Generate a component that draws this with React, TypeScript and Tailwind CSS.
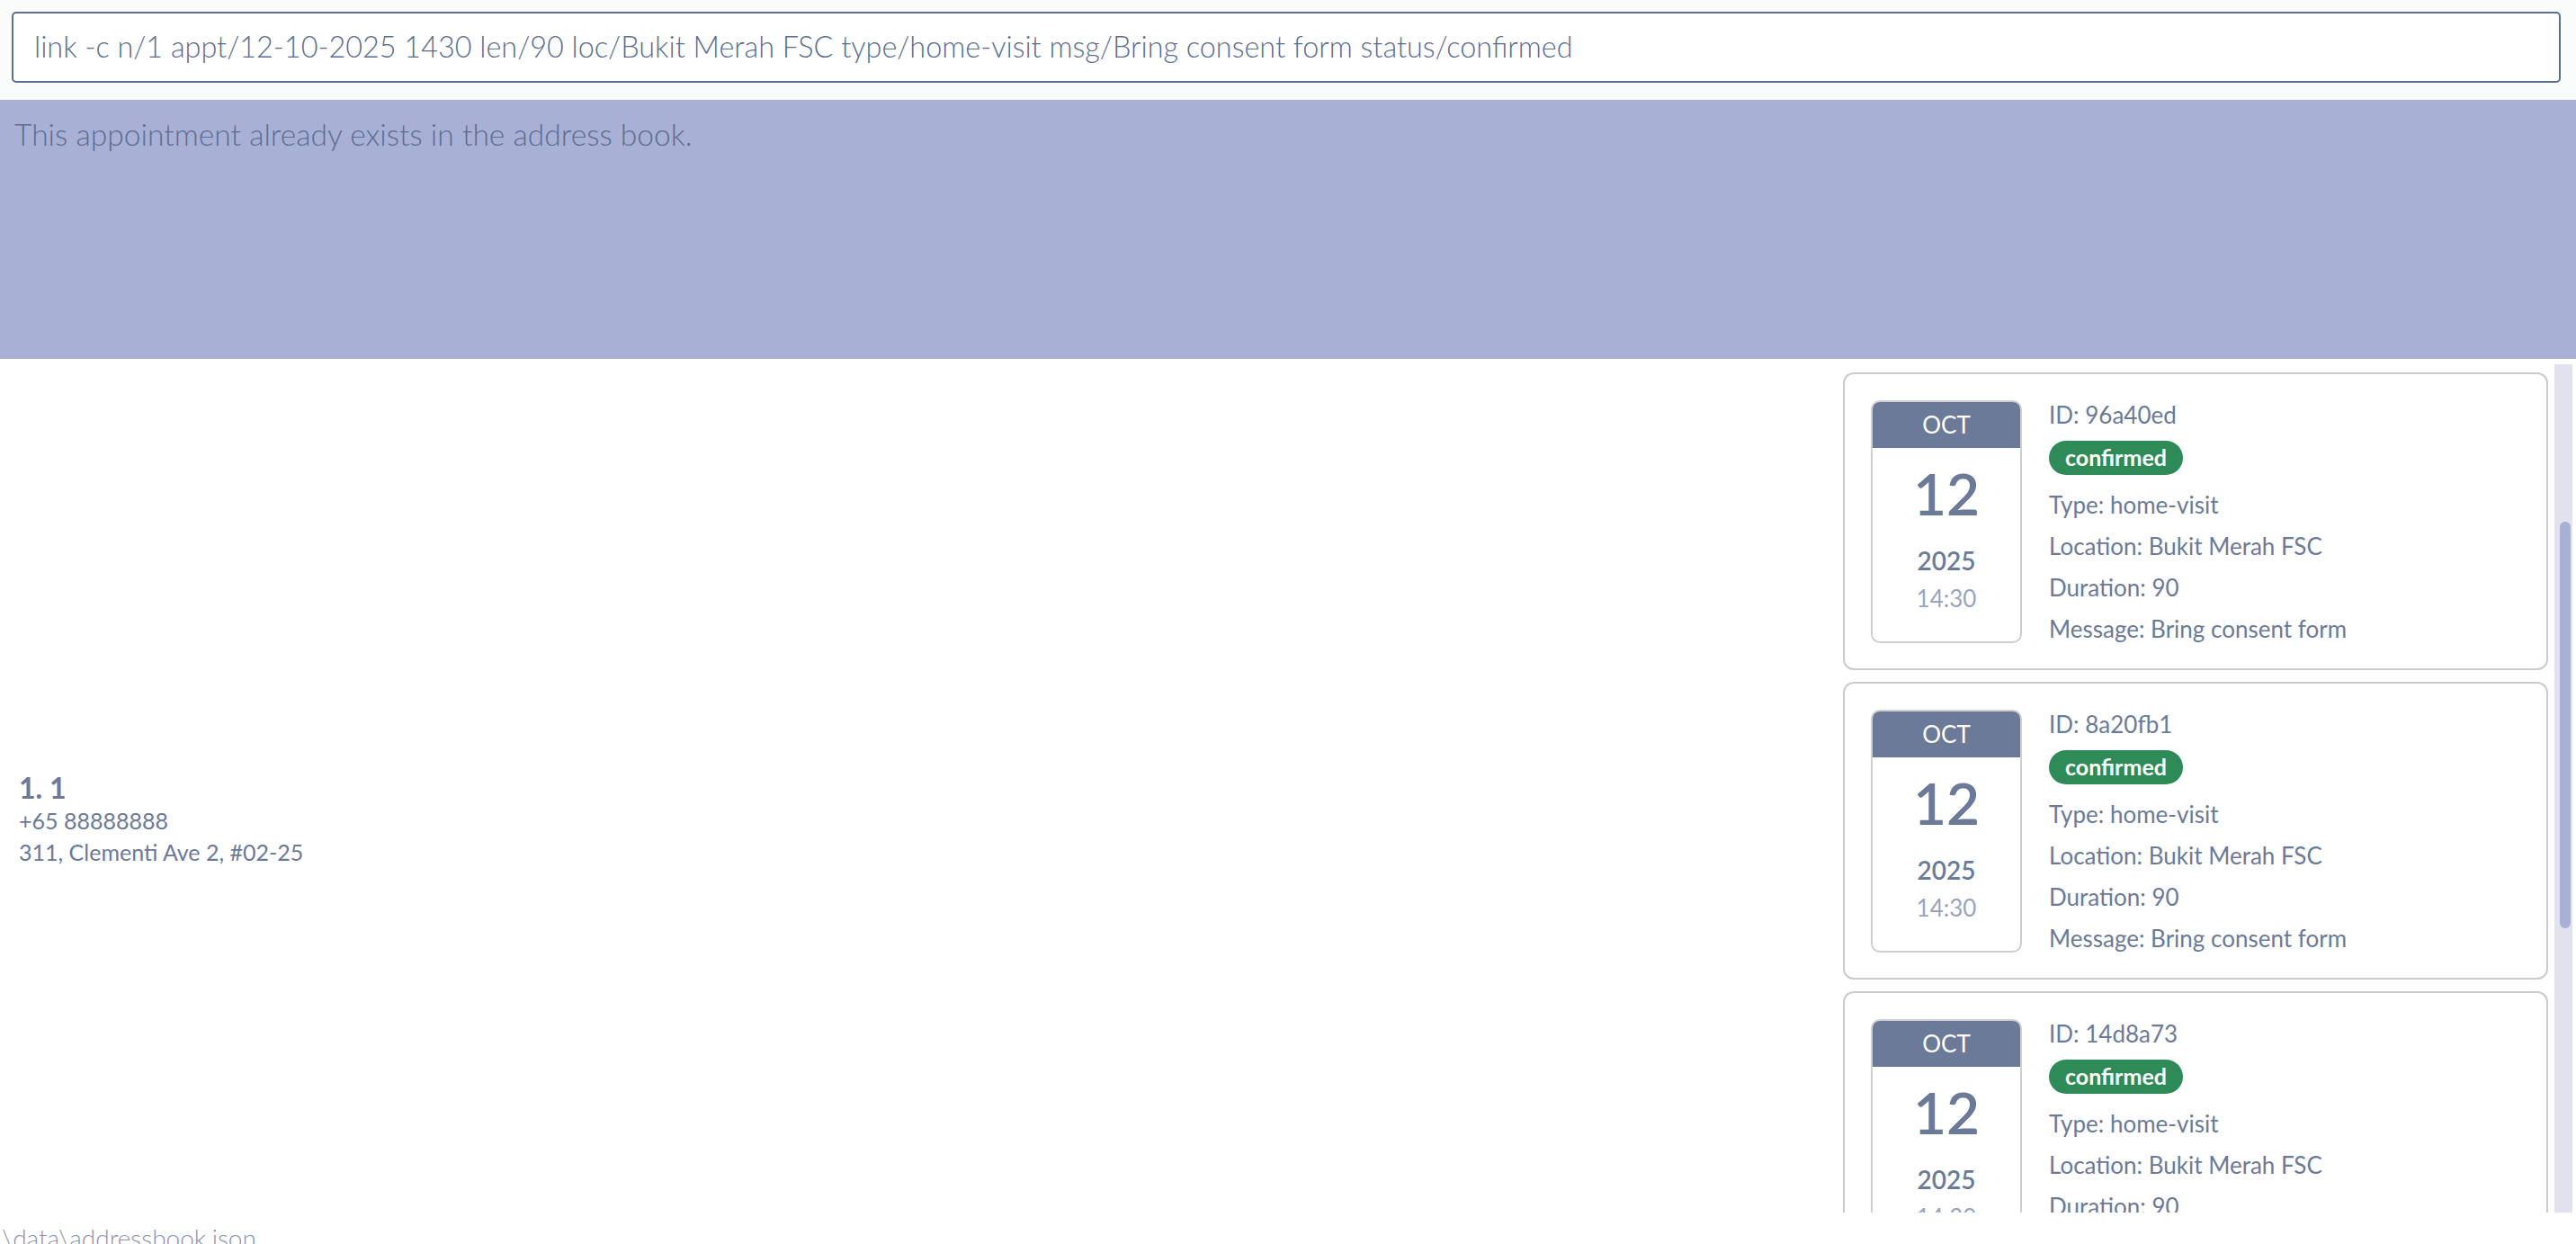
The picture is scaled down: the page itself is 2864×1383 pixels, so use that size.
import React from "react";

type Appt = {
  id: string;
  month: string;
  day: string;
  year: string;
  time: string;
  status: string;
  type: string;
  location: string;
  duration: string;
  message: string;
};

const appts: Appt[] = [
  { id: "96a40ed", month: "OCT", day: "12", year: "2025", time: "14:30", status: "confirmed", type: "home-visit", location: "Bukit Merah FSC", duration: "90", message: "Bring consent form" },
  { id: "8a20fb1", month: "OCT", day: "12", year: "2025", time: "14:30", status: "confirmed", type: "home-visit", location: "Bukit Merah FSC", duration: "90", message: "Bring consent form" },
  { id: "14d8a73", month: "OCT", day: "12", year: "2025", time: "14:30", status: "confirmed", type: "home-visit", location: "Bukit Merah FSC", duration: "90", message: "Bring consent form" },
];

const font = { fontFamily: "Lato, 'Liberation Sans', sans-serif" };

function DateBox({ a }: { a: Appt }) {
  return (
    <div className="flex h-[270px] w-[168px] shrink-0 flex-col overflow-hidden rounded-[10px] border-2 border-[#cfcfcf] bg-white">
      <div className="flex h-[51px] shrink-0 items-center justify-center bg-[#6b7a99] text-[26px] text-white">
        {a.month}
      </div>
      <div className="flex flex-1 flex-col items-center">
        <div className="mt-[16px] text-[64px] font-semibold leading-[70px] text-[#6b7a99]">{a.day}</div>
        <div className="mt-[22px] text-[28px] font-semibold leading-[34px] text-[#6b7a99]">{a.year}</div>
        <div className="mt-[8px] text-[26px] leading-[34px] text-[#9aa4c0]">{a.time}</div>
      </div>
    </div>
  );
}

function ApptCard({ a }: { a: Appt }) {
  return (
    <div className="flex h-[331px] gap-[30px] rounded-[12px] border-2 border-[#cbcbcb] bg-white p-[29px]">
      <DateBox a={a} />
      <div className="flex flex-col text-[26px] text-[#6b7a99]">
        <div className="leading-[32px]">ID: {a.id}</div>
        <div className="mt-[13px] flex h-[42px] w-[149px] items-center justify-center rounded-full bg-[#2e8b57] text-[25px] font-bold text-white">
          {a.status}
        </div>
        <div className="mt-[10px] leading-[46px]">Type: {a.type}</div>
        <div className="leading-[46px]">Location: {a.location}</div>
        <div className="leading-[46px]">Duration: {a.duration}</div>
        <div className="leading-[46px]">Message: {a.message}</div>
      </div>
    </div>
  );
}

export default function App() {
  return (
    <div className="flex h-[1383px] w-full flex-col overflow-hidden bg-white" style={font}>
      <div className="shrink-0 bg-[#fafbfb] pb-[19px] pl-[13px] pr-[17px] pt-[13px]">
        <div className="flex h-[79px] items-center whitespace-nowrap rounded-[5px] border-2 border-[#5b6d91] bg-white px-[23px] text-[32.4px] font-light text-[#5b6d91]">
          link -c n/1 appt/12-10-2025 1430 len/90 loc/Bukit Merah FSC type/home-visit msg/Bring consent form status/confirmed
        </div>
      </div>
      <div className="h-[288px] shrink-0 bg-[#a8b0d6] px-[16px] pt-[13px] text-[33.6px] font-light text-[#5b6d91]">
        This appointment already exists in the address book.
      </div>
      <div className="mt-[6px] flex h-[943px] shrink-0">
        <div className="flex flex-1 flex-col justify-center pl-[21px] pt-[68px] text-[#6b7a99]">
          <div className="text-[32px] font-bold leading-[38px]">1. 1</div>
          <div className="text-[25px] leading-[35px]">+65 88888888</div>
          <div className="text-[25px] leading-[35px]">311, Clementi Ave 2, #02-25</div>
        </div>
        <div className="flex w-[824px]">
          <div className="flex flex-1 flex-col gap-[13px] overflow-hidden py-[9px] pl-[9px] pr-[7px]">
            {appts.map((a) => (
              <div key={a.id} className="shrink-0">
                <ApptCard a={a} />
              </div>
            ))}
          </div>
          <div className="flex w-[20px] shrink-0 flex-col bg-[#e2e2ee] pl-[6px] pr-[2px] pt-[175px]">
            <div className="h-[452px] rounded-[6px] bg-[#a8b0d6]" />
          </div>
          <div className="w-[4px] shrink-0" />
        </div>
      </div>
      <div className="shrink-0 pl-[2px] pt-[11px] text-[28px] font-light leading-[34px] text-[#8a93b0]">\data\addressbook.json</div>
    </div>
  );
}
